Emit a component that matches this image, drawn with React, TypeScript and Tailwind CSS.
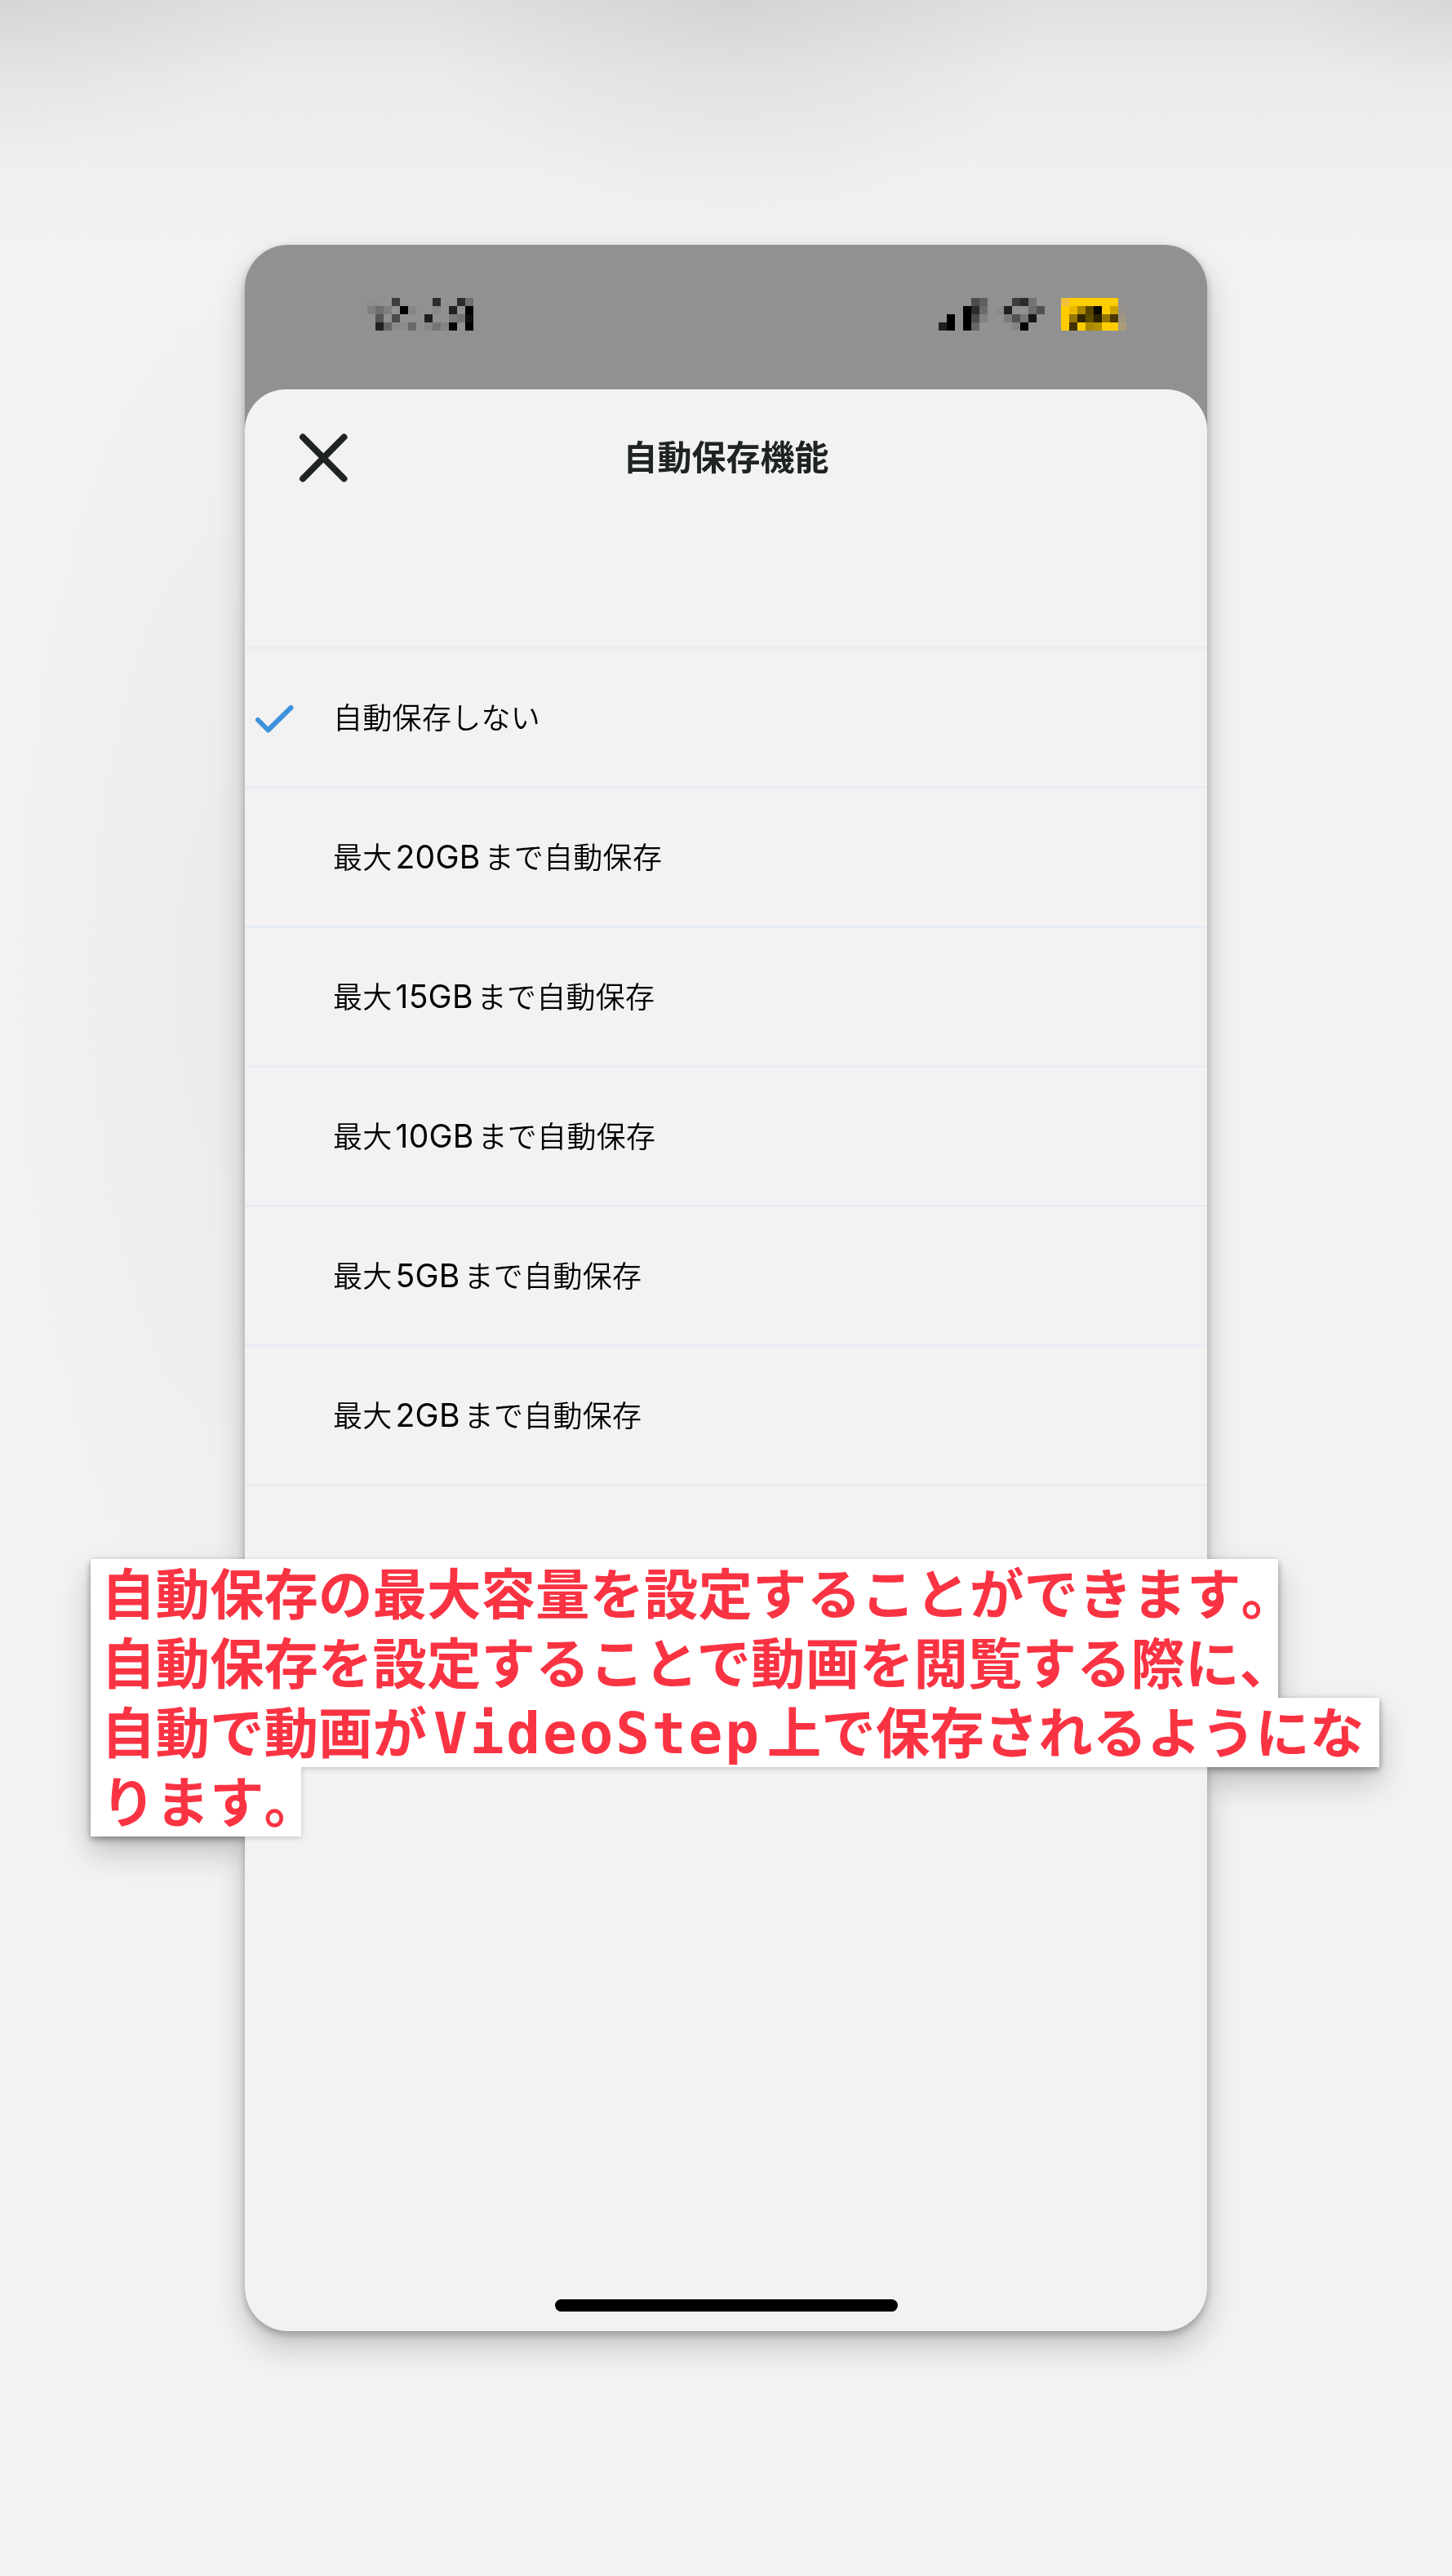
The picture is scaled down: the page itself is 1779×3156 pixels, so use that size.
import type { ReactNode } from 'react';
import clsx from 'clsx';

const OPTIONS = [
    { label: '自動保存しない', selected: true },
    { before: '最大', size: '20GB', after: 'まで自動保存' },
    { before: '最大', size: '15GB', after: 'まで自動保存' },
    { before: '最大', size: '10GB', after: 'まで自動保存' },
    { before: '最大', size: '5GB', after: 'まで自動保存' },
    { before: '最大', size: '2GB', after: 'まで自動保存' },
];

// One string per mosaic row, '-' leaves the bar colour visible
const CLOCK = [
    '8e8e8e 8f8f8f - 3d3d3d - - - - 2c2c2c - - 2b2b2b 6f6f6f',
    '808080 6f6f6f 7f7f7f - 000 868686 - - 888888 - 202020 - 000',
    '- 555555 - 4b4b4b - - - 1f1f1f - - 7b7b7b 727272 0f0f0f',
    '- 202020 666666 8b8b8b 8b8b8b 6a6a6a - 868686 747474 848484 050505 - 000',
];

const STATUS = [
    '- - - - 4b4b4b 5f5f5f - - - 3e3e3e 2b2b2b 737373 - - - efc03c fc0 fc0 fc0 fc0 fc0 fc0 -',
    '- - - 000 2c2c2c 6a6a6a - 8b8b8b 202020 - - 6d6d6d 505050 - - fc0 ebb900 a98700 574300 080600 fc0 cda300 96918a',
    '- 000 - 000 4b4b4b 828282 - - 7b7b7b 525252 787878 161616 - - - fc0 957700 322600 5e4b00 2a2000 937400 493900 a09580',
    '1f1f1f 000 - 000 666666 - - - - 848484 000 - - - - fc0 403200 fc0 aa8800 b59100 fc0 fc0 ad9b78',
];

function Mosaic({ rows }: { rows: string[] }) {
    const cells = rows.map((row) => row.split(' '));
    const width = cells[0].length * 10;

    return (
        <svg width={width} height={40} viewBox={`0 0 ${width} 40`} shapeRendering="crispEdges">
            {cells.map((row, y) =>
                row.map((color, x) =>
                    color === '-' ? null : (
                        <rect key={`${x}-${y}`} x={x * 10} y={y * 10} width={10} height={10} fill={`#${color}`} />
                    )
                )
            )}
        </svg>
    );
}

function OptionRow({ option }: { option: any }) {
    return (
        <li className="flex h-[171px] items-center border-b-[3px] border-[#e6ecf2] pl-[12px]">
            <div className="w-[96px] pt-[3px]">
                {option.selected && (
                    <svg width="50" height="40" viewBox="0 0 50 40" fill="none">
                        <path d="M4 21 L16.5 33.5 L44.5 6" stroke="#3e92de" strokeWidth="6" strokeLinecap="round" strokeLinejoin="round" />
                    </svg>
                )}
            </div>
            <span className="pb-[4px] text-[36px] leading-[54px] font-[350] tracking-[0.3px] whitespace-nowrap text-black">
                {option.label}
                {option.before}
                {option.size && (
                    <span className="mr-[5px] ml-[4px] font-['Inter'] text-[39px] leading-none font-normal tracking-[0.2px]">{option.size}</span>
                )}
                {option.after}
            </span>
        </li>
    );
}

function NoteLine({ className, children }: { className?: string; children: ReactNode }) {
    return (
        <div className={clsx('h-[85px] bg-white pl-[13px] whitespace-nowrap', className)}>
            {children}
        </div>
    );
}

// Closing punctuation takes half a cell at the end of a line
function Stop({ children }: { children: ReactNode }) {
    return <span className="[font-feature-settings:'halt']">{children}</span>;
}

export default function App() {
    return (
        <div className="relative h-[3156px] w-[1779px] overflow-hidden bg-[#f2f2f2] bg-[radial-gradient(ellipse_380px_280px_at_900px_0px,rgba(0,0,0,0.06),transparent),radial-gradient(ellipse_360px_200px_at_0px_0px,rgba(0,0,0,0.05),transparent),radial-gradient(ellipse_200px_120px_at_1779px_0px,rgba(0,0,0,0.04),transparent),radial-gradient(ellipse_300px_900px_at_300px_1200px,rgba(0,0,0,0.03),transparent),linear-gradient(to_bottom,rgba(0,0,0,0.075)_0px,rgba(0,0,0,0.03)_90px,rgba(0,0,0,0.01)_200px,transparent_320px)] px-[300px] pt-[300px] font-['Noto_Sans_CJK_JP',sans-serif]">
            {/* Phone and note cast one shared shadow */}
            <div className="relative h-[2556px] w-[1179px] [filter:drop-shadow(0_4px_5px_rgba(0,0,0,0.25))_drop-shadow(0_18px_18px_rgba(0,0,0,0.2))]">
                <main className="flex h-full flex-col overflow-hidden rounded-[53px] bg-[#919191]">
                    <div className="flex h-[177px] shrink-0 items-start justify-between pt-[65px] pr-[99px] pl-[150px]">
                        <Mosaic rows={CLOCK} />
                        <Mosaic rows={STATUS} />
                    </div>

                    <section className="flex grow flex-col rounded-t-[50px] bg-[#f2f2f2]">
                        <header className="relative flex h-[167px] items-center justify-center">
                            <button className="absolute top-[54px] left-[66px]" aria-label="閉じる">
                                <svg width="60" height="60" viewBox="0 0 60 60" fill="none">
                                    <path d="M5 4.5 L55.5 55.5 M55.5 4.5 L5 55.5" stroke="#1f2324" strokeWidth="8" strokeLinecap="round" />
                                </svg>
                            </button>
                            <h1 className="pb-[5px] text-[42px] leading-[60px] font-bold text-[#1f2324]">自動保存機能</h1>
                        </header>

                        <ul className="mt-[148px] border-t-[3px] border-[#e6ecf2]">
                            {OPTIONS.map((option, i) => (
                                <OptionRow key={i} option={option} />
                            ))}
                        </ul>

                        <div className="mx-auto mt-auto mb-[24px] h-[15px] w-[420px] rounded-full bg-black" />
                    </section>
                </main>

                <div className="absolute top-[1610px] left-[-189px] text-[66.5px] leading-[79px] font-bold text-[#fa3343] [filter:drop-shadow(0_2px_3px_rgba(0,0,0,0.18))]">
                    <NoteLine className="w-[1455px]">
                        自動保存の最大容量を設定することができます<Stop>。</Stop>
                    </NoteLine>
                    <NoteLine className="w-[1455px]">
                        自動保存を設定することで動画を閲覧する際に<Stop>、</Stop>
                    </NoteLine>
                    <NoteLine className="w-[1579px]">
                        自動で動画が
                        <span className="mr-[7px] ml-[8px] font-['DejaVu_Sans_Mono'] text-[69.5px] leading-none tracking-[2.8px]">VideoStep</span>
                        上で保存されるようにな
                    </NoteLine>
                    <NoteLine className="w-[258px]">
                        ります<Stop>。</Stop>
                    </NoteLine>
                </div>
            </div>
        </div>
    );
}
